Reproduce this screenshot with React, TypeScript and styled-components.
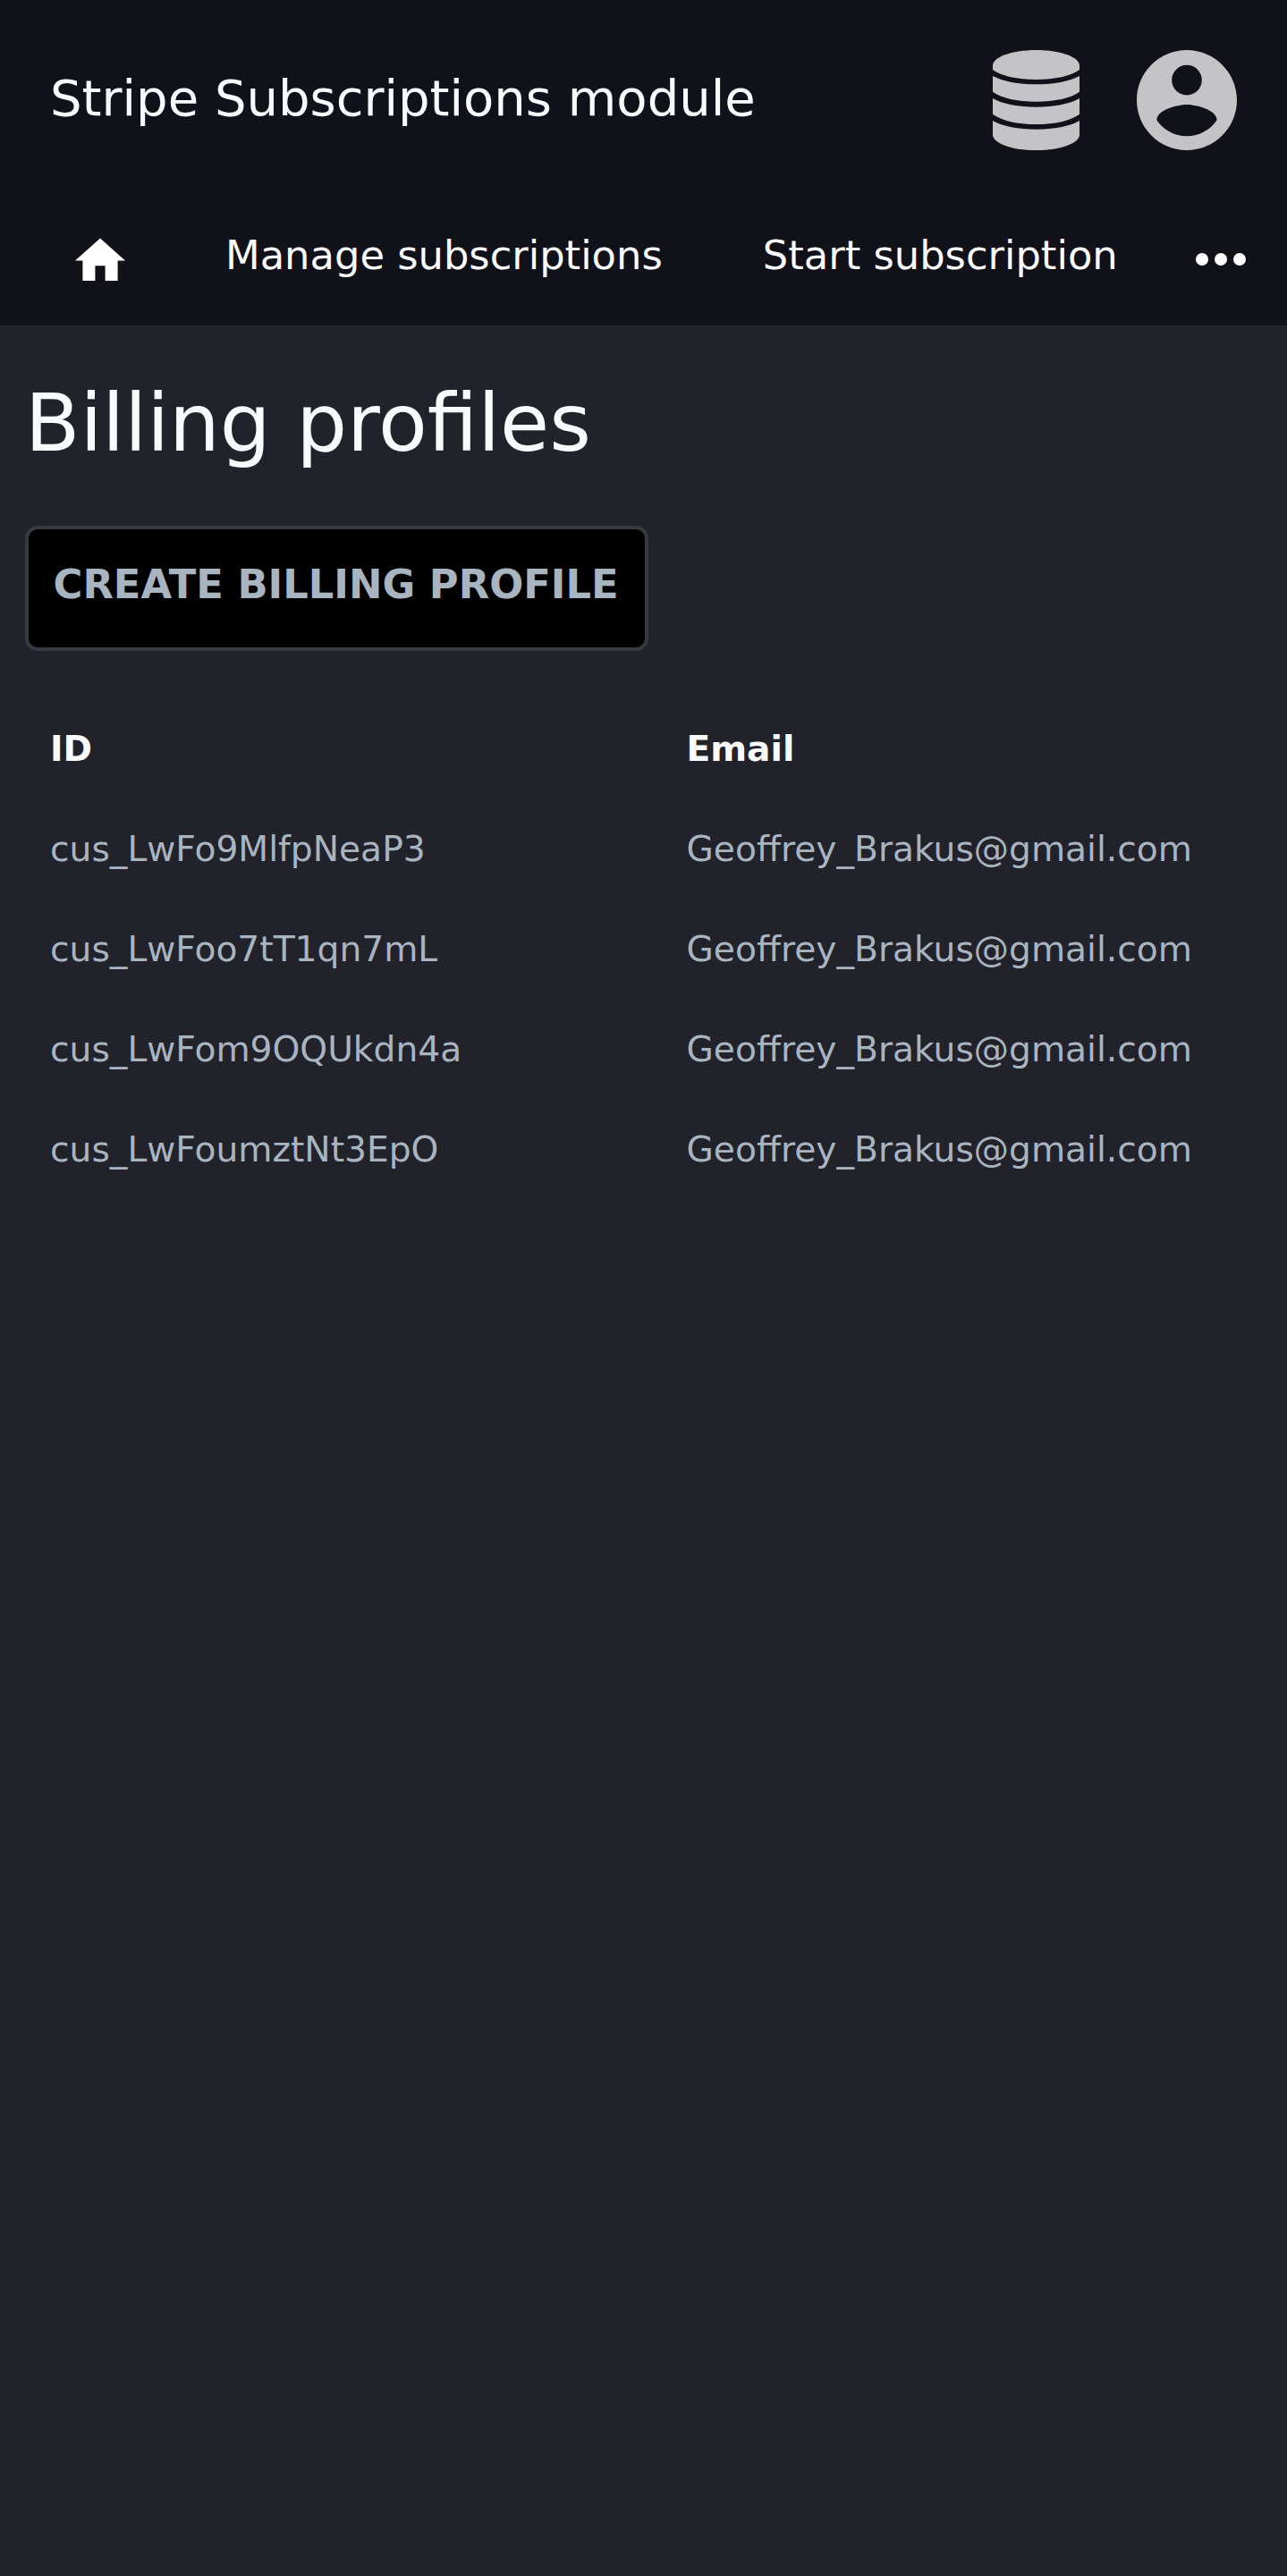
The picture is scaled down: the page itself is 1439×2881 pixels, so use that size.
import React from "react";
import styled, { createGlobalStyle } from "styled-components";

const Global = createGlobalStyle`
  body { margin: 0; background: #22222b; color: #f9fafc; font-family: "DejaVu Sans", sans-serif; }
  * { box-sizing: border-box; }
  svg { display: block; }
`;
const Page = styled.div`min-height: 2881px; background: #22222b;`;
const Header = styled.header`height: 364px; background: #11111a;`;
const TopBar = styled.div`height: 224px; padding: 0 56px; display: flex; align-items: center; justify-content: space-between;`;
const Brand = styled.div`padding-bottom: 4px; font-size: 56px; line-height: 84px; white-space: nowrap;`;
const Actions = styled.div`display: flex; gap: 64px; color: #c4c4c6;`;
const Nav = styled.nav`height: 140px; display: flex; justify-content: space-between; padding: 28px 46px 0 84px; font-size: 44.8px; line-height: 67px;`;
const NavGroup = styled.div`display: flex; gap: 112px;`;
const NavLink = styled.a<{ $top?: number }>`padding-top: ${p => p.$top ?? 0}px; white-space: nowrap; svg { color: #fff; }`;
const Main = styled.main`padding: 55px 28px;`;
const Title = styled.h1`margin: 0; font-size: 89.6px; line-height: 108px; font-weight: 400;`;
const CreateButton = styled.button`display: flex; align-items: flex-start; margin: 61px 0 0; min-width: 696.5px; height: 140px; padding: 28px 28px 28px 27.5px; border: 4px solid #343a40; border-radius: 14px; background: #000; color: #a8b4c0; font: 700 44.8px/67.2px "DejaVu Sans", sans-serif; white-space: nowrap;`;
const Table = styled.div`margin-top: 53px; display: grid; grid-template-columns: 711.5px 1fr; grid-auto-rows: 112px; font-size: 39.2px; align-items: center;`;
const Cell = styled.div<{ $head?: boolean }>`padding-left: 28px; white-space: nowrap; color: ${p => p.$head ? "#f9fafc" : "#a8b4c0"}; font-weight: ${p => p.$head ? 700 : 400};`;

const DatabaseIcon = () => (
  <svg width="97" height="112" viewBox="0 0 291 336" fill="currentColor">
    <path d="M0 66V52C0 25 60 0 145.500 0S291 25 291 52V66C262 87 208 99 145.500 99S29 87 0 66Z" />
    <path d="M0 87C33 105 86 115 145.500 115S258 105 291 87V140C262 161 208 173 145.500 173S29 161 0 140Z" />
    <path d="M0 162C33 181 86 191 145.500 191S258 181 291 162V215C262 237 208 249 145.500 249S29 237 0 215Z" />
    <path d="M0 237C33 256 86 266 145.500 266S258 256 291 237V284C291 311 230 336 145.500 336S0 311 0 284Z" />
  </svg>
);
const AccountIcon = () => (
  <svg width="112" height="112" viewBox="2 2 20 20" fill="currentColor">
    <path d="M12 2C6.480 2 2 6.480 2 12s4.480 10 10 10 10-4.480 10-10S17.520 2 12 2zm0 3c1.660 0 3 1.340 3 3s-1.340 3-3 3-3-1.340-3-3 1.340-3 3-3zm0 14.200c-2.500 0-4.710-1.280-6-3.220.030-1.990 4-3.080 6-3.080 1.990 0 5.970 1.090 6 3.080-1.290 1.940-3.500 3.220-6 3.220z" />
  </svg>
);
const HomeIcon = () => (
  <svg width="56" height="48" viewBox="2 2.850 20 17.143" fill="currentColor">
    <path d="M10 20v-6h4v6h5v-8h3L12 3 2 12h3v8z" />
  </svg>
);
const MoreIcon = () => (
  <svg width="56" height="14" viewBox="4 10 16 4" fill="currentColor">
    <circle cx="6" cy="12" r="2" /><circle cx="12" cy="12" r="2" /><circle cx="18" cy="12" r="2" />
  </svg>
);

const profiles = ["cus_LwFo9MlfpNeaP3", "cus_LwFoo7tT1qn7mL", "cus_LwFom9OQUkdn4a", "cus_LwFoumztNt3EpO"];

export default function App() {
  return (
    <Page>
      <Global />
      <Header>
        <TopBar>
          <Brand>Stripe Subscriptions module</Brand>
          <Actions><DatabaseIcon /><AccountIcon /></Actions>
        </TopBar>
        <Nav>
          <NavGroup>
            <NavLink $top={14}><HomeIcon /></NavLink>
            <NavLink>Manage subscriptions</NavLink>
            <NavLink>Start subscription</NavLink>
          </NavGroup>
          <NavLink $top={31.3}><MoreIcon /></NavLink>
        </Nav>
      </Header>
      <Main>
        <Title>Billing profiles</Title>
        <CreateButton>CREATE BILLING PROFILE</CreateButton>
        <Table>
          <Cell $head>ID</Cell>
          <Cell $head>Email</Cell>
          {profiles.map(id => (
            <React.Fragment key={id}>
              <Cell>{id}</Cell>
              <Cell>Geoffrey_Brakus@gmail.com</Cell>
            </React.Fragment>
          ))}
        </Table>
      </Main>
    </Page>
  );
}
